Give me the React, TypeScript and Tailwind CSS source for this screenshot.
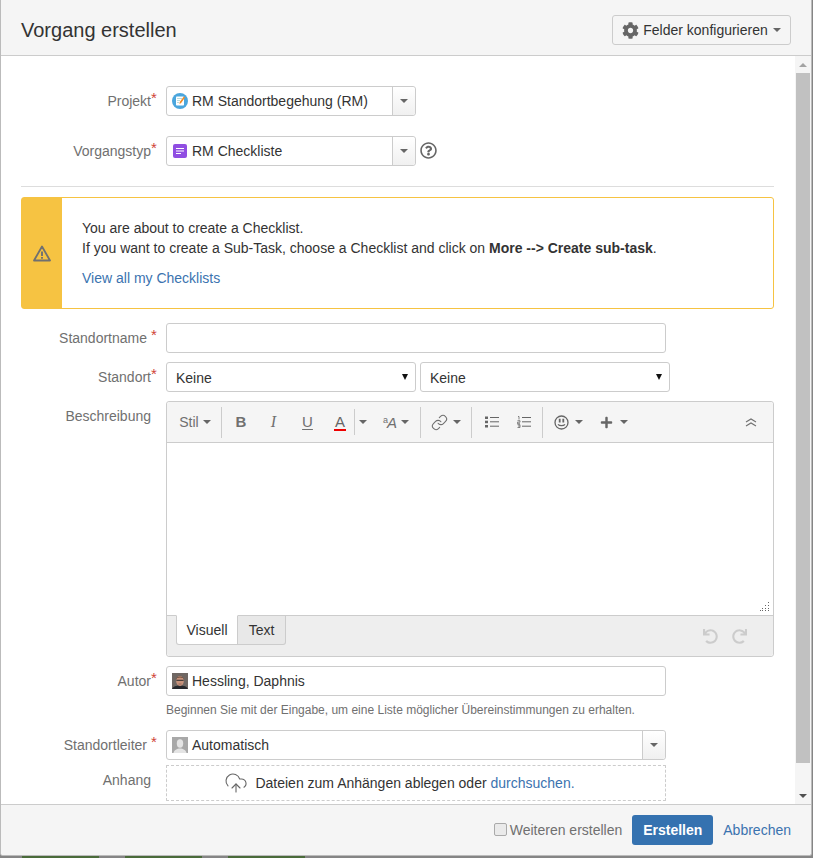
import React from "react";
import { FaCog, FaPlus, FaUndo, FaRedo, FaRegQuestionCircle } from "react-icons/fa";
import { CloudUpload, Link } from "lucide-react";

const Caret = ({ c = "border-t-[#666]" }: { c?: string }) => (
  <span className={`inline-block w-0 h-0 border-x-[4px] border-x-transparent border-t-[4px] ${c}`} />
);

function Row({ label, req, mb, children, spaced }: { label: string; req?: boolean; mb: string; children: React.ReactNode; spaced?: boolean }) {
  return (
    <div className={`flex items-start ${mb}`}>
      <div className="w-[136px] shrink-0 flex justify-end text-[#707070] pt-[5px]">
        <span className={spaced ? "mr-[4px]" : ""}>{label}</span>
        <span className="w-[6px] text-[#d04437] text-[15px] leading-[15px] h-[15px] -mt-[1px]">{req ? "*" : ""}</span>
      </div>
      <div className="ml-[9px] flex-1 min-w-0">{children}</div>
    </div>
  );
}

function ProjectIcon() {
  return (
    <svg width="16" height="16" viewBox="0 0 16 16">
      <circle cx="8" cy="8" r="8" fill="#4ba6dd" />
      <rect x="4" y="3.500" width="8" height="9" rx="0.800" fill="#fff" />
      <path d="M5 5.500h5M5 7.500h3M5 9.500h2" stroke="#9cc" strokeWidth="0.700" />
      <path d="M11.800 3.500l1.300 1-4 5.600-1.600.8.200-1.800z" fill="#f08a24" />
    </svg>
  );
}

function TypeIcon() {
  return (
    <svg width="14" height="14" viewBox="0 0 14 14">
      <rect width="14" height="14" rx="2" fill="#904ee2" />
      <path d="M3 4.500h8M3 7h8M3 9.500h5" stroke="#fff" strokeWidth="1.200" />
    </svg>
  );
}

function AuthorAvatar() {
  return (
    <svg width="16" height="16" viewBox="0 0 16 16">
      <rect width="16" height="16" fill="#6f6763" />
      <path d="M0 16c1-2.500 4-3.500 8-3.500s7 1 8 3.500z" fill="#25272c" />
      <ellipse cx="8" cy="8" rx="3.800" ry="5" fill="#c8937c" />
      <path d="M4 6.500C4 2.500 12 2.500 12 6.500L11 5C9 4.200 7 4.200 5 5z" fill="#6a4a38" />
      <path d="M4.400 7.300h7.200" stroke="#2a2a2a" strokeWidth="1" />
      <path d="M6.500 11h3" stroke="#8d5f50" strokeWidth="0.700" />
    </svg>
  );
}

function AutoAvatar() {
  return (
    <svg width="16" height="16" viewBox="0 0 16 16">
      <rect width="16" height="16" fill="#a8a8a8" />
      <ellipse cx="8" cy="6.500" rx="3.200" ry="4.200" fill="#e4e4e4" />
      <path d="M1.500 16c.5-3 3.500-4.500 6.500-4.500s6 1.500 6.500 4.500z" fill="#e4e4e4" />
    </svg>
  );
}

function Picker({ icon, text, width }: { icon: React.ReactNode; text: string; width: string }) {
  return (
    <div className={`${width} h-[30px] flex border border-[#ccc] rounded-[3px] bg-white`}>
      <div className="flex-1 flex items-center pl-[5px] gap-[4px] min-w-0">
        <span className="w-[16px] flex justify-center shrink-0">{icon}</span>
        <span className="text-[#333]">{text}</span>
      </div>
      <div className="w-[23px] flex items-center justify-center border-l border-[#ccc] bg-gradient-to-b from-white to-[#f0f0f0] rounded-r-[3px]">
        <Caret />
      </div>
    </div>
  );
}

function NativeSelect() {
  return (
    <div className="w-[250px] h-[30px] flex items-center justify-between border border-[#ccc] rounded-[3px] bg-white pl-[9px] pr-[7px] text-[#333]">
      <span className="pt-[2px]">Keine</span>
      <span className="inline-block w-0 h-0 border-x-[3.500px] border-x-transparent border-t-[6px] border-t-[#111] mb-[1px]" />
    </div>
  );
}

const Sep = ({ h = "h-[31px]" }: { h?: string }) => <span className={`w-px ${h} bg-[#ccc]`} />;

const ToolGlyph = ({ w, className = "", children }: { w: string; className?: string; children: React.ReactNode }) => (
  <span className={`flex items-center justify-center ${w} ${className}`}>{children}</span>
);

function Toolbar() {
  return (
    <div className="h-[41px] flex items-center bg-[#f5f5f5] border-b border-[#ccc] rounded-t-[3px] text-[#707070]">
      <div className="w-[54px] flex items-center justify-center gap-[4px] pl-[2px] text-[14px]">
        <span>Stil</span>
        <Caret />
      </div>
      <Sep />
      <ToolGlyph w="w-[37px]" className="font-bold text-[15px] pl-[1px]">B</ToolGlyph>
      <ToolGlyph w="w-[29px]" className="italic text-[16px] font-['Liberation_Serif',serif]">I</ToolGlyph>
      <ToolGlyph w="w-[38px]" className="text-[15px] underline underline-offset-2 pl-[1px]">U</ToolGlyph>
      <span className="w-[28px] flex justify-center">
        <span className="text-[15px] leading-[15px] border-b-2 border-[#e00] px-[1px] text-[#666]">A</span>
      </span>
      <Sep h="h-[26px]" />
      <span className="w-[16px] flex justify-center"><Caret /></span>
      <span className="w-[49px] flex items-center justify-center gap-[4px] pl-[1px]">
        <span className="flex items-start relative">
          <span className="text-[9px] leading-[10px] -mr-[1px]">a</span>
          <span className="text-[15px] italic leading-[15px]">A</span>
        </span>
        <Caret />
      </span>
      <Sep />
      <span className="w-[50px] flex items-center justify-center gap-[5px]">
        <Link size={17} strokeWidth={1.500} />
        <Caret />
      </span>
      <Sep />
      <span className="w-[39px] flex justify-center">
        <svg width="14" height="12" viewBox="0 0 14 12" fill="#666">
          <rect x="0" y="0.500" width="3" height="2.500" /><rect x="0" y="4.700" width="3" height="2.500" /><rect x="0" y="9" width="3" height="2.500" />
          <path d="M5 1.500h9M5 5.800h9M5 10.200h9" stroke="#666" strokeWidth="1" />
        </svg>
      </span>
      <span className="w-[31px] flex justify-center pr-[6px]">
        <svg width="14" height="12" viewBox="0 0 14 12" fill="none" stroke="#666">
          <path d="M5 1.500h9M5 5.800h9M5 10.200h9" strokeWidth="1" />
          <path d="M1 .5h1v3M.5 4.700h2.500v1.500h-2.500v1.500h2.500M.5 8.700h2.500v2.800h-2.500M1 10h2" strokeWidth="0.800" />
        </svg>
      </span>
      <Sep />
      <span className="w-[48px] flex items-center justify-center gap-[6px] pl-[2px]">
        <svg width="15" height="15" viewBox="0 0 15 15" fill="none" stroke="#666" strokeWidth="1.300">
          <circle cx="7.500" cy="7.500" r="6.500" />
          <path d="M5.700 3.800v3.600M9.300 3.800v3.600" strokeWidth="1.800" />
          <path d="M4 9.300c1.500 1.800 5.500 1.800 7 0" />
        </svg>
        <Caret />
      </span>
      <span className="w-[46px] flex items-center justify-center gap-[7px]">
        <FaPlus size={13} color="#666" />
        <Caret />
      </span>
      <span className="flex-1" />
      <span className="w-[44px] flex justify-center">
        <svg width="12" height="9" viewBox="0 0 12 9" fill="none" stroke="#707070" strokeWidth="1.100">
          <path d="M1 4l5-3 5 3M1 8l5-3 5 3" />
        </svg>
      </span>
    </div>
  );
}

function Editor() {
  return (
    <div className="w-[608px] border border-[#ccc] rounded-[3px]">
      <Toolbar />
      <div className="h-[173px] bg-white border-b border-[#ccc] flex items-end justify-end pr-[3px] pb-[3px]">
        <svg width="10" height="10" viewBox="0 0 10 10" fill="#666">
          <rect x="8" y="0" width="1" height="1" /><rect x="8" y="3" width="1" height="1" /><rect x="5" y="3" width="1" height="1" />
          <rect x="8" y="6" width="1" height="1" /><rect x="5" y="6" width="1" height="1" /><rect x="2" y="6" width="1" height="1" />
          <rect x="8" y="8" width="1" height="1" /><rect x="5" y="8" width="1" height="1" /><rect x="2" y="8" width="1" height="1" /><rect x="0" y="8" width="1" height="1" />
        </svg>
      </div>
      <div className="h-[40px] bg-[#eee] flex items-start pl-[9px] rounded-b-[3px]">
        <div className="h-[30px] w-[62px] -mt-px bg-white border border-[#ccc] border-t-white rounded-bl-[3px] flex items-center justify-center text-[#333]">Visuell</div>
        <div className="h-[30px] w-[48px] -mt-px bg-[#e8e8e8] border border-l-0 border-[#ccc] rounded-br-[3px] flex items-center justify-center text-[#333]">Text</div>
        <div className="flex-1" />
        <div className="flex items-center gap-[14px] mt-[13px] mr-[26px] text-[#ccc]">
          <FaUndo size={15} />
          <FaRedo size={15} />
        </div>
      </div>
    </div>
  );
}

export default function App() {
  return (
    <div className="w-[813px] h-[858px] overflow-hidden bg-[#858585] font-['Liberation_Sans',Arial,sans-serif] text-[14px] leading-[20px] text-[#333]">
      <div className="w-[812px] h-[856px] flex flex-col bg-white border-x border-b border-[#bbb] rounded-b-[3px] overflow-hidden">
        <header className="h-[56px] shrink-0 flex items-center justify-between bg-[#f5f5f5] border-b border-[#ccc] pl-[20px] pr-[20px] pt-[5px]">
          <h2 className="text-[20px] leading-[28px] text-[#333] font-normal">Vorgang erstellen</h2>
          <div className="h-[30px] w-[179px] flex items-center justify-center gap-[4px] border border-[#ccc] rounded-[3px] text-[#333] bg-[#f5f5f5]">
            <FaCog size={17} color="#666" />
            <span className="mr-[1px]">Felder konfigurieren</span>
            <Caret />
          </div>
        </header>

        <div className="flex-1 min-h-0 flex">
          <main className="flex-1 min-w-0 pl-[20px] pr-[21px] pt-[30px] overflow-hidden">
            <Row label="Projekt" req mb="mb-[20px]">
              <Picker icon={<ProjectIcon />} text="RM Standortbegehung (RM)" width="w-[250px]" />
            </Row>
            <Row label="Vorgangstyp" req mb="mb-[20px]">
              <div className="flex items-center gap-[4px]">
                <Picker icon={<TypeIcon />} text="RM Checkliste" width="w-[250px]" />
                <FaRegQuestionCircle size={17} color="#666" className="-mt-[2px]" />
              </div>
            </Row>
            <div className="border-t border-[#ddd] mb-[10px]" />
            <div className="h-[112px] flex border border-[#f6c342] rounded-[3px] mb-[14px]">
              <div className="w-[40px] bg-[#f6c342] flex items-center justify-center">
                <svg width="18" height="17" viewBox="0 0 18 17" fill="none" stroke="#707070" strokeWidth="1.800" strokeLinejoin="round">
                  <path d="M9 1.500L17 15.500H1z" />
                  <path d="M9 6.500v4.500M9 12v1.800" strokeWidth="1.900" />
                </svg>
              </div>
              <div className="pl-[20px] pt-[20px] text-[#333]">
                <p>You are about to create a Checklist.</p>
                <p>If you want to create a Sub-Task, choose a Checklist and click on <b>More --&gt; Create sub-task</b>.</p>
                <p className="mt-[10px] text-[#3b73af]">View all my Checklists</p>
              </div>
            </div>
            <Row label="Standortname" req spaced mb="mb-[9px]">
              <div className="w-[500px] h-[30px] border border-[#ccc] rounded-[3px] bg-white" />
            </Row>
            <Row label="Standort" req mb="mb-[9px]">
              <div className="flex gap-[4px]">
                <NativeSelect />
                <NativeSelect />
              </div>
            </Row>
            <Row label="Beschreibung" mb="mb-[9px]">
              <Editor />
            </Row>
            <Row label="Autor" req mb="mb-0">
              <div className="w-[500px] h-[30px] flex items-center gap-[4px] pl-[5px] border border-[#ccc] rounded-[3px]">
                <AuthorAvatar />
                <span>Hessling, Daphnis</span>
              </div>
              <p className="text-[12px] leading-[16px] text-[#707070] mt-[6px] mb-[12px]">Beginnen Sie mit der Eingabe, um eine Liste möglicher Übereinstimmungen zu erhalten.</p>
            </Row>
            <Row label="Standortleiter" req spaced mb="mb-[5px]">
              <Picker icon={<AutoAvatar />} text="Automatisch" width="w-[500px]" />
            </Row>
            <Row label="Anhang" mb="mb-0">
              <div className="w-[500px] h-[36px] flex items-center justify-center gap-[7px] border border-dashed border-[#ccc] rounded-[1px] pr-[33px]">
                <CloudUpload size={24} strokeWidth={1.100} color="#666" />
                <span className="text-[#333]">Dateien zum Anhängen ablegen oder <span className="text-[#3b73af]">durchsuchen.</span></span>
              </div>
            </Row>
          </main>

          <div className="w-[16px] shrink-0 bg-[#f5f5f5] flex flex-col items-center">
            <div className="h-[17px] flex items-center justify-center">
              <span className="w-0 h-0 border-x-[4px] border-x-transparent border-b-[4px] border-b-[#a3a3a3]" />
            </div>
            <div className="w-[14px] h-[690px] bg-[#c1c1c1]" />
            <div className="flex-1" />
            <div className="h-[17px] flex items-center justify-center">
              <span className="w-0 h-0 border-x-[4px] border-x-transparent border-t-[4px] border-t-[#505050]" />
            </div>
          </div>
        </div>

        <footer className="h-[51px] shrink-0 flex items-center justify-end gap-[10px] bg-[#f5f5f5] border-t border-[#ccc] pr-[20px]">
          <label className="flex items-center gap-[3px] text-[#707070]">
            <span className="w-[13px] h-[13px] border border-[#aaa] rounded-[2px] bg-[#eaeaea] -mt-[2px]" />
            <span>Weiteren erstellen</span>
          </label>
          <span className="h-[30px] w-[81px] flex items-center justify-center bg-[#3572b0] rounded-[3px] text-white font-bold">Erstellen</span>
          <span className="text-[#3b73af]">Abbrechen</span>
        </footer>
      </div>
      <div className="h-[2px] flex">
        <span className="w-[22px]" />
        <span className="w-[77px] bg-[#4a6b3a]" />
        <span className="w-[26px]" />
        <span className="w-[77px] bg-[#4a6b3a]" />
        <span className="w-[26px]" />
        <span className="w-[77px] bg-[#4a6b3a]" />
      </div>
    </div>
  );
}
